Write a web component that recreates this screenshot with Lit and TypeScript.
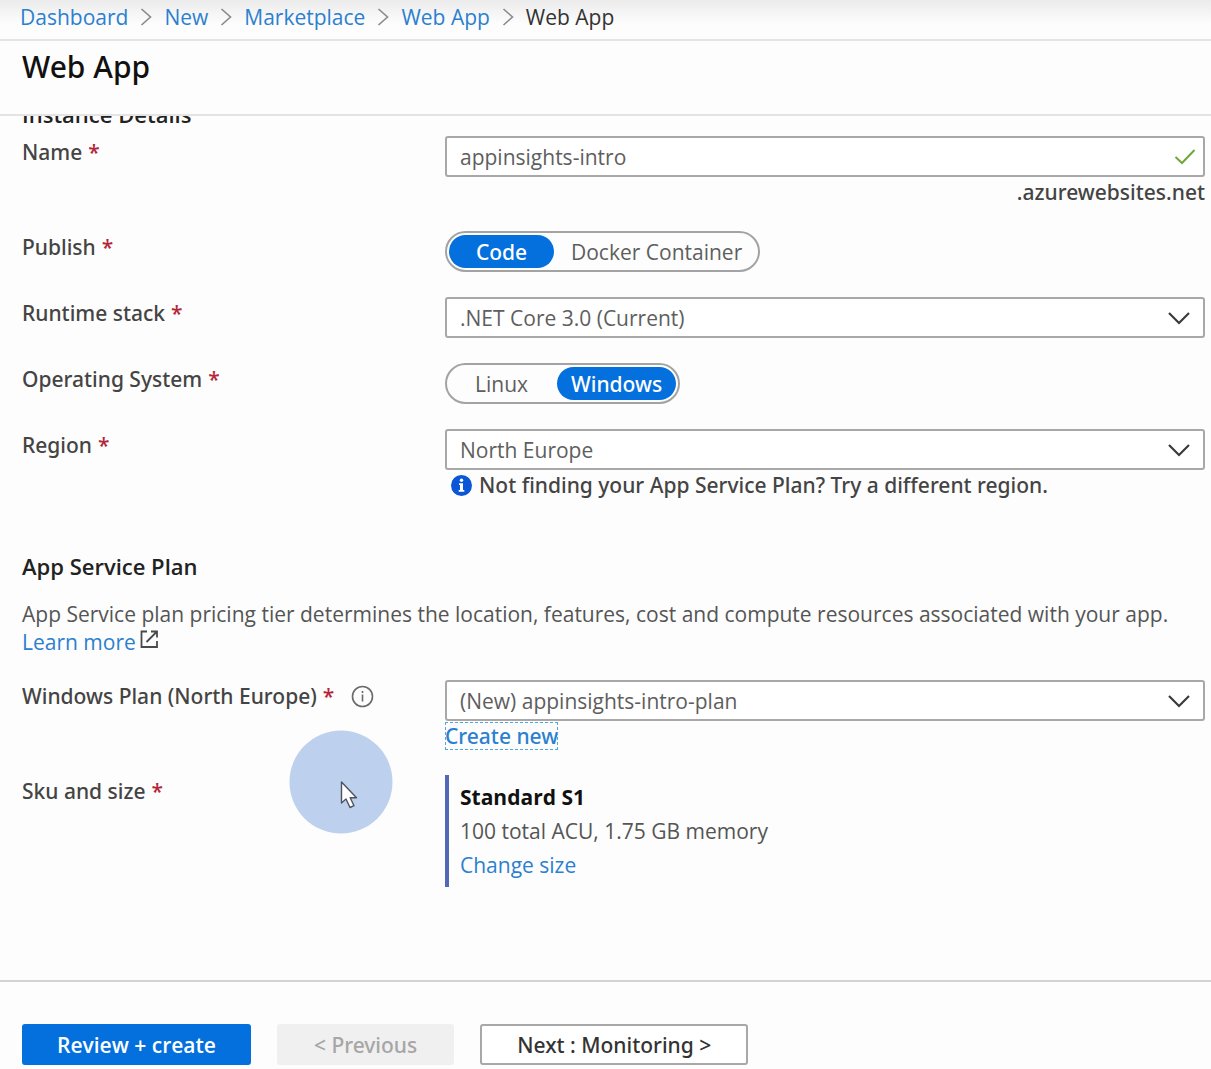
import { LitElement, html, css, svg, nothing } from "lit";
import { customElement, property, state } from "lit/decorators.js";

interface Crumb {
  text: string;
  href?: string;
}

const CRUMBS: Crumb[] = [
  { text: "Dashboard", href: "#dashboard" },
  { text: "New", href: "#new" },
  { text: "Marketplace", href: "#marketplace" },
  { text: "Web App", href: "#web-app" },
  { text: "Web App" },
];

const star = html`<span class="star" aria-hidden="true">*</span>`;

const chevronDown = svg`<svg class="chevron" width="24" height="16" viewBox="0 0 24 16" fill="none" aria-hidden="true">
  <path d="M2 3 12 13 22 3" stroke="#3b3b3b" stroke-width="2.200"/></svg>`;

/** Pill-shaped switch between a few options. */
@customElement("option-pill")
export class OptionPill extends LitElement {
  @property() label = "";
  @property() name = "";
  @property() value = "";
  @property({ attribute: false }) options: string[] = [];

  static styles = css`
    :host {
      display: block;
    }
    .group {
      display: inline-flex;
      gap: 3px;
      padding: 2px;
      border: 2px solid #a3a3a3;
      border-radius: 21px;
      box-sizing: border-box;
      height: 41px;
      vertical-align: top;
    }
    .option {
      display: flex;
      align-items: center;
      justify-content: center;
      box-sizing: border-box;
      padding: 0 14px;
      border-radius: 17px;
      color: #5e5e5e;
      cursor: pointer;
    }
    .option:first-child {
      min-width: 105px;
    }
    .option.on {
      background: #0370de;
      color: #fff;
      font-family: "Noto Sans", sans-serif;
      font-weight: 500;
    }
    .radio {
      position: absolute;
      opacity: 0;
      width: 1px;
      height: 1px;
      margin: 0;
    }
  `;

  render() {
    return html`<div class="group" role="radiogroup" aria-label=${this.label}>
      ${this.options.map(
        (o) => html`<label class="option ${o === this.value ? "on" : ""}">
          <input class="radio" type="radio" name=${this.name} .checked=${o === this.value}
            @change=${() => (this.value = o)} />${o}</label>`
      )}
    </div>`;
  }
}

@customElement("app-root")
export class AppRoot extends LitElement {
  @state() private siteName = "appinsights-intro";

  static styles = css`
    :host {
      display: flex;
      flex-direction: column;
      height: 100vh;
      position: relative;
      overflow: hidden;
      background: #fdfdfd;
      color: #444;
      font-family: "Segoe UI", "Open Sans", "Noto Sans", sans-serif;
      font-size: 21px;
      line-height: 28px;
    }
    a {
      color: #2b80cf;
      text-decoration: none;
    }
    h1,
    h2,
    p {
      margin: 0;
    }
    .crumbs {
      display: flex;
      align-items: center;
      gap: 12px;
      padding: 3px 20px 8px;
      border-bottom: 2px solid #e4e4e4;
      background: linear-gradient(#ebebeb, #fdfdfd 24px);
      color: #333;
    }
    .title,
    .name,
    .hint,
    .button,
    .create {
      font-family: "Noto Sans", sans-serif;
    }
    .title {
      padding: 8px 22px 29px;
      border-bottom: 2px solid #e4e4e4;
      color: #111;
      font-size: 30px;
      line-height: 36px;
      font-weight: 500;
    }
    .body {
      flex: 1;
      min-height: 0;
      overflow-y: auto;
      padding: 0 6px 0 22px;
    }
    .heading {
      color: #222;
      font-size: 22px;
      line-height: 28px;
      font-weight: 600;
    }
    .heading.scrolled {
      margin-top: -16px;
    }
    .fields {
      display: grid;
      gap: 25px;
      padding-top: 8px;
    }
    .row {
      display: grid;
      grid-template-columns: 423px minmax(0, 1fr);
    }
    .name {
      display: flex;
      align-items: center;
      align-self: start;
      padding-top: 2px;
      font-weight: 500;
    }
    .star {
      margin-left: 6px;
      color: #b3263a;
    }
    .info {
      margin-left: 17px;
    }
    .control {
      position: relative;
    }
    .box {
      display: block;
      width: 100%;
      height: 41px;
      box-sizing: border-box;
      margin: 0;
      padding: 0 48px 0 13px;
      border: 2px solid #a8a8a8;
      border-radius: 3px;
      background: #fff;
      color: #5e5e5e;
      font: inherit;
      appearance: none;
      outline: none;
    }
    .tick {
      position: absolute;
      right: 9px;
      top: 12px;
    }
    .chevron {
      position: absolute;
      right: 14px;
      top: 13px;
    }
    .hint {
      display: flex;
      align-items: center;
      gap: 7px;
      margin-top: 1px;
      padding-left: 6px;
      font-weight: 500;
    }
    .hint.end {
      justify-content: flex-end;
      padding-left: 0;
    }
    .plan {
      padding-top: 53px;
    }
    .intro {
      padding-top: 20px;
      color: #555;
    }
    .open {
      margin-left: 4px;
    }
    .create {
      display: inline-block;
      margin-top: 1px;
      outline: 1px dashed #4fa9e0;
      outline-offset: -1px;
      font-weight: 500;
      vertical-align: top;
    }
    .fields.lower {
      padding-top: 24px;
    }
    .sku {
      padding: 5px 0 5px 11px;
      border-left: 4px solid #5468b8;
      line-height: 34px;
      color: #555;
    }
    .sku-name {
      color: #111;
      font-weight: 700;
    }
    .footer {
      display: flex;
      gap: 26px;
      padding: 42px 22px 4px;
      border-top: 2px solid #d2d2d2;
    }
    .button {
      height: 41px;
      padding: 0 35px;
      border: 2px solid #a8a8a8;
      border-radius: 3px;
      background: #fff;
      color: #333;
      font-size: 21px;
      line-height: 28px;
      font-weight: 500;
      white-space: nowrap;
    }
    .button.primary {
      padding: 0 33px;
      border-color: #0370de;
      background: #0370de;
      color: #fff;
      font-family: "Open Sans", sans-serif;
      font-weight: 600;
    }
    .button:disabled {
      border-color: #f1f0f0;
      background: #f1f0f0;
      color: #a6a6a6;
    }
    .pointer {
      position: absolute;
      left: 289px;
      top: 730px;
      pointer-events: none;
    }
  `;

  private crumb(c: Crumb, i: number) {
    return html`${i
      ? html`<svg width="12" height="20" viewBox="0 0 12 20" fill="none" aria-hidden="true">
          <path d="M1.500 2 10.500 10 1.500 18" stroke="#8a8a8a" stroke-width="1.600" />
        </svg>`
      : nothing}${c.href ? html`<a href=${c.href}>${c.text}</a>` : html`<span>${c.text}</span>`}`;
  }

  private dropdown(id: string, value: string) {
    return html`<select class="box" id=${id}><option selected>${value}</option></select>${chevronDown}`;
  }

  render() {
    return html`
      <nav class="crumbs" aria-label="Breadcrumb">${CRUMBS.map((c, i) => this.crumb(c, i))}</nav>
      <h1 class="title">Web App</h1>
      <main class="body">
        <h2 class="heading scrolled">Instance Details</h2>
        <div class="fields">
          <div class="row">
            <label class="name" for="site">Name ${star}</label>
            <div class="control">
              <input class="box" id="site" type="text" .value=${this.siteName}
                @input=${(e: InputEvent) => (this.siteName = (e.target as HTMLInputElement).value)} />
              <svg class="tick" width="22" height="18" viewBox="0 0 22 18" fill="none" aria-hidden="true">
                <path d="M1.500 9 8 15 20.500 2" stroke="#6fa83a" stroke-width="2" />
              </svg>
              <div class="hint end">.azurewebsites.net</div>
            </div>
          </div>
          <div class="row">
            <span class="name">Publish ${star}</span>
            <option-pill label="Publish" name="publish" value="Code" .options=${["Code", "Docker Container"]}></option-pill>
          </div>
          <div class="row">
            <label class="name" for="stack">Runtime stack ${star}</label>
            <div class="control">${this.dropdown("stack", ".NET Core 3.0 (Current)")}</div>
          </div>
          <div class="row">
            <span class="name">Operating System ${star}</span>
            <option-pill label="Operating System" name="os" value="Windows" .options=${["Linux", "Windows"]}></option-pill>
          </div>
          <div class="row">
            <label class="name" for="region">Region ${star}</label>
            <div class="control">
              ${this.dropdown("region", "North Europe")}
              <div class="hint">
                <svg width="21" height="21" viewBox="0 0 21 21" aria-hidden="true">
                  <circle cx="10.500" cy="10.500" r="10.500" fill="#0b56d8" />
                  <circle cx="10.500" cy="5.300" r="1.700" fill="#fff" />
                  <path d="M8 8.300h4v6.700h1.300v1.700H7.700V15H9v-5H8z" fill="#fff" />
                </svg>
                <span>Not finding your App Service Plan? Try a different region.</span>
              </div>
            </div>
          </div>
        </div>

        <section class="plan">
          <h2 class="heading">App Service Plan</h2>
          <p class="intro">
            App Service plan pricing tier determines the location, features, cost and compute resources associated with
            your app. <br /><a href="#learn-more">Learn more<svg class="open" width="19" height="20" viewBox="0 0 19 20"
                fill="none" stroke="#4a4a4a" stroke-width="1.800" aria-hidden="true">
                <path d="M7 1.500H1.500v15.500h15.500v-6M6.500 12 16 2.500M11 1.500h6V7.500" />
              </svg></a>
          </p>
          <div class="fields lower">
            <div class="row">
              <label class="name" for="plan">Windows Plan (North Europe) ${star}
                <svg class="info" width="23" height="23" viewBox="0 0 23 23" fill="none" aria-hidden="true">
                  <circle cx="11.500" cy="11.500" r="10" stroke="#6a6a6a" stroke-width="1.600" />
                  <path d="M11.500 9.500v7M11.500 6v2" stroke="#6a6a6a" stroke-width="1.600" />
                </svg>
              </label>
              <div class="control">
                ${this.dropdown("plan", "(New) appinsights-intro-plan")}
                <a class="create" href="#create-new">Create new</a>
              </div>
            </div>
            <div class="row">
              <span class="name">Sku and size ${star}</span>
              <div class="sku">
                <div class="sku-name">Standard S1</div>
                <div>100 total ACU, 1.75 GB memory</div>
                <a href="#change-size">Change size</a>
              </div>
            </div>
          </div>
        </section>
      </main>
      <footer class="footer">
        <button class="button primary" type="button">Review + create</button>
        <button class="button" type="button" disabled>&lt; Previous</button>
        <button class="button" type="button">Next : Monitoring &gt;</button>
      </footer>
      <svg class="pointer" width="104" height="104" viewBox="0 0 104 104" aria-hidden="true">
        <circle cx="52" cy="52" r="51.500" fill="#bdd0ee" />
        <path d="M52.500 52v21l4.500-4 4 8.500 4-1.800-3.800-8h6.300z" fill="#fff" stroke="#4d5460" stroke-width="1.400" stroke-linejoin="round" />
      </svg>
    `;
  }
}
